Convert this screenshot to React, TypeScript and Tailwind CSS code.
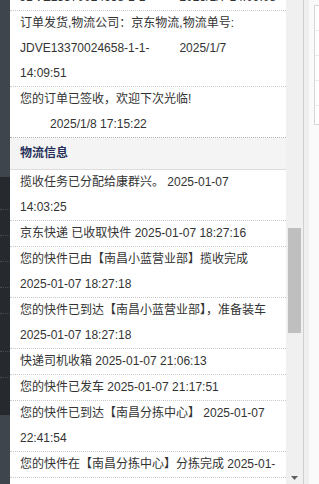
import React from "react";

const NB = "\u00a0";
const GAP = NB.repeat(9);

type RowData = { lines: string[]; cls?: string };

const topRows: RowData[] = [
  { lines: ["JDVE13370024658-1-1-" + GAP + "2025/1/7 14:09:08"] },
  {
    lines: [
      "订单发货,物流公司：京东物流,物流单号:",
      "JDVE13370024658-1-1-" + GAP + "2025/1/7",
      "14:09:51",
    ],
  },
  {
    lines: ["您的订单已签收，欢迎下次光临!", GAP + "2025/1/8 17:15:22"],
    cls: "border-[#b5b5b5]",
  },
];

const logRows: RowData[] = [
  { lines: ["揽收任务已分配给康群兴。 2025-01-07", "14:03:25"] },
  { lines: ["京东快递 已收取快件 2025-01-07 18:27:16"] },
  { lines: ["您的快件已由【南昌小蓝营业部】揽收完成", "2025-01-07 18:27:18"] },
  { lines: ["您的快件已到达【南昌小蓝营业部】，准备装车", "2025-01-07 18:27:18"] },
  { lines: ["快递司机收箱 2025-01-07 21:06:13"] },
  { lines: ["您的快件已发车 2025-01-07 21:17:51"] },
  { lines: ["您的快件已到达【南昌分拣中心】 2025-01-07", "22:41:54"] },
  { lines: ["您的快件在【南昌分拣中心】分拣完成 2025-01-"] },
];

function Row({ row }: { row: RowData }) {
  return (
    <div
      className={
        "px-[10px] border-b border-dotted " + (row.cls ? row.cls : "border-[#c9c9c9]")
      }
    >
      {row.lines.map((l, i) => (
        <div key={i} className="h-[25px] leading-[25px] whitespace-pre">
          {l}
        </div>
      ))}
    </div>
  );
}

export default function App() {
  return (
    <div className="w-[319px] h-[484px] flex overflow-hidden bg-white font-['Liberation_Sans','Noto_Sans_CJK_SC',sans-serif] text-[12px] text-[#333]">
      {/* background page strip on the left */}
      <div className="w-[10px] flex flex-col shrink-0">
        <div className="h-[177px] bg-[#3e454d]" />
        <div className="h-[238px] bg-[#26292d] flex flex-col">
          <div className="h-[33px] border-b border-dotted border-[#474c52]" />
          <div className="h-[26px] border-b border-dotted border-[#474c52]" />
          <div className="h-[26px] border-b border-dotted border-[#474c52]" />
          <div className="h-[26px] border-b border-dotted border-[#474c52]" />
          <div className="h-[26px] border-b border-dotted border-[#474c52]" />
          <div className="h-[38px] border-b border-dotted border-[#474c52]" />
          <div className="h-[26px] border-b border-dotted border-[#474c52]" />
        </div>
        <div className="flex-1 bg-[#3e454d]" />
      </div>

      {/* main panel */}
      <div className="w-[276px] shrink-0 overflow-hidden bg-white">
        <div className="-mt-[15px]">
          {topRows.map((r, i) => (
            <Row key={i} row={r} />
          ))}
          <div className="h-[32px] bg-[#f4f4f4] border-b border-[#dcdcdc] px-[10px] leading-[31px] font-bold text-[#26305a]">
            物流信息
          </div>
          {logRows.map((r, i) => (
            <Row key={i} row={r} />
          ))}
          <div className="h-[25px]" />
        </div>
      </div>

      {/* scrollbar */}
      <div className="w-[17px] shrink-0 bg-[#f0f0f0] flex flex-col">
        <div className="h-[228px]" />
        <div className="h-[105px] mx-[2px] bg-[#bfbfbf]" />
        <div className="flex-1" />
        <div className="h-[17px] flex items-start justify-center pt-[9px]">
          <svg width="7" height="4" viewBox="0 0 7 4">
            <path d="M0 0 L7 0 L3.5 4 Z" fill="#606060" />
          </svg>
        </div>
      </div>

      <div className="w-px shrink-0 bg-[#cfcfcf]" />
      <div className="w-[5px] shrink-0 bg-[#efefef]" />

      {/* background page on the right */}
      <div className="flex-1 bg-[#fafafa] pt-[5px] pl-[5px]">
        <div className="h-[120px] border border-r-0 border-[#d6d6d6] bg-white flex flex-col">
          <div className="h-[25px] border-b border-[#ececec]" />
          <div className="h-[25px] border-b border-[#ececec]" />
          <div className="h-[25px] border-b border-[#ececec]" />
          <div className="h-[25px] border-b border-[#ececec]" />
        </div>
      </div>
    </div>
  );
}
